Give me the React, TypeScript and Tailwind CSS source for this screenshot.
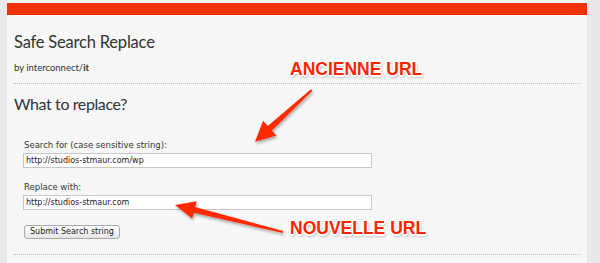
import React from "react";

const heading = { fontFamily: "Lato, 'Open Sans', sans-serif" };
const body = { fontFamily: "'DejaVu Sans', Verdana, sans-serif" };

const Field = ({ label, value }: { label: string; value: string }) => (
  <div>
    <div className="text-[8.5px] leading-[11px] text-[#333]" style={body}>
      {label}
    </div>
    <div className="mt-[2px] ml-[-1px] h-[15px] w-[349px] border border-[#c8c8c8] bg-white px-[2px] text-[8px] leading-[13px] text-[#222]" style={body}>
      {value}
    </div>
  </div>
);

const Callout = ({ text, className }: { text: string; className: string }) => (
  <span
    className={`absolute font-bold text-[17.5px] leading-none text-[#ff2400] [text-shadow:-1px_-1px_0_#fff,1px_-1px_0_#fff,-1px_1px_0_#fff,1px_1px_0_#fff,0_-1.5px_0_#fff,0_1.5px_0_#fff,-1.5px_0_0_#fff,1.5px_0_0_#fff,1px_2px_3px_rgba(0,0,0,0.45)] ${className}`}
    style={{ fontFamily: "'Liberation Sans', Arial, sans-serif" }}
  >
    {text}
  </span>
);

export default function App() {
  return (
    <div className="relative h-[263px] w-[600px] overflow-hidden bg-[#e9e9e9]">
      <div className="ml-[7px] h-full w-[580px] bg-[#f7f7f7] pt-[3px]">
        <div className="h-[12px] bg-[#f33100]" />
        <div className="px-[7px] text-[#333]">
          <h1 className="mt-[17px] text-[16.5px] leading-[20px] tracking-[-0.2px]" style={heading}>
            Safe Search Replace
          </h1>
          <p className="mt-[10px] text-[9.5px] leading-[12px]" style={heading}>
            by interconnect/<b>it</b>
          </p>
          <div className="mt-[9px] border-t border-dotted border-[#bdbdbd]" />
          <h2 className="mt-[10px] text-[16px] leading-[20px] tracking-[-0.4px]" style={heading}>
            What to replace?
          </h2>
          <div className="mt-[26px] flex flex-col gap-[14px] pl-[10px]">
            <Field label="Search for (case sensitive string):" value="http://studios-stmaur.com/wp" />
            <Field label="Replace with:" value="http://studios-stmaur.com" />
          </div>
          <button
            className="mt-[15px] ml-[10px] h-[14px] rounded-[3px] border border-[#a9a9a9] bg-gradient-to-b from-white to-[#e6e6e6] px-[5px] text-[8px] leading-[12px] text-[#222]"
            style={body}
          >
            Submit Search string
          </button>
          <div className="mt-[14px] border-t border-dotted border-[#bdbdbd]" />
        </div>
      </div>

      <svg className="absolute inset-0" width="600" height="263" viewBox="0 0 600 263">
        <defs>
          <filter id="sh" x="-20%" y="-20%" width="140%" height="140%">
            <feDropShadow dx="1" dy="2" stdDeviation="1.5" floodColor="#000" floodOpacity="0.35" />
          </filter>
        </defs>
        <g fill="#ff2a00" filter="url(#sh)">
          <polygon points="312.4,90.7 271.8,130.4 276.5,135.6 255,141.7 263.1,120.8 267.8,126 311,89.3" />
          <polygon points="283.2,231 195.1,207 196.6,201.2 175,205 192.2,218.6 193.7,212.8 282.8,233" />
        </g>
      </svg>

      <Callout text="ANCIENNE URL" className="left-[290px] top-[61px]" />
      <Callout text="NOUVELLE URL" className="left-[290px] top-[220px]" />
    </div>
  );
}
